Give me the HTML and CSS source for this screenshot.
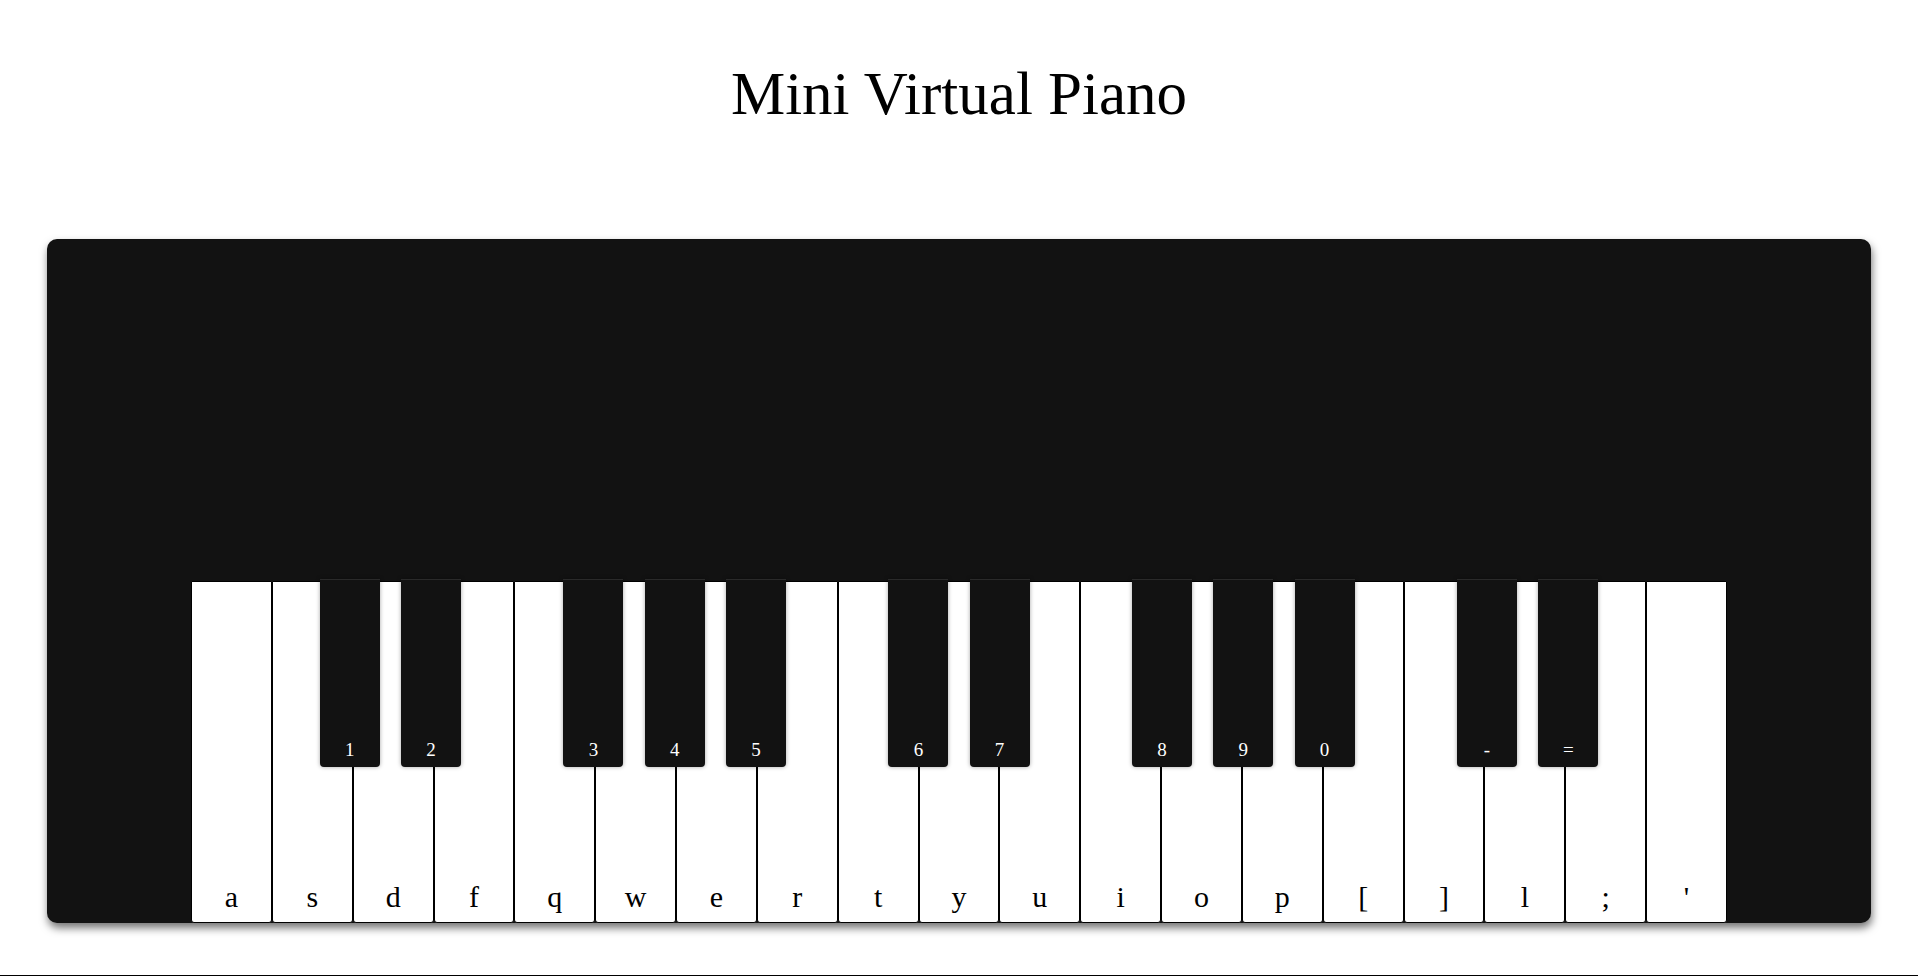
FILE: index.html
```html
<!DOCTYPE html>
<html lang="en">
<head>
  <meta charset="UTF-8" />
  <meta name="viewport" content="width=device-width, initial-scale=1" />
  <title>Mini Virtual Piano</title>
  <link rel="stylesheet" href="styles.css">
</head>
<body>

  <h1>Mini Virtual Piano</h1>

  <section class="piano">
    <div class="keys">
      <div class="key white"><span>a</span></div>
      <div class="key white"><span>s</span></div>
      <div class="key black" style="--at: 2"><span>1</span></div>
      <div class="key white"><span>d</span></div>
      <div class="key black" style="--at: 3"><span>2</span></div>
      <div class="key white"><span>f</span></div>
      <div class="key white"><span>q</span></div>
      <div class="key black" style="--at: 5"><span>3</span></div>
      <div class="key white"><span>w</span></div>
      <div class="key black" style="--at: 6"><span>4</span></div>
      <div class="key white"><span>e</span></div>
      <div class="key black" style="--at: 7"><span>5</span></div>
      <div class="key white"><span>r</span></div>
      <div class="key white"><span>t</span></div>
      <div class="key black" style="--at: 9"><span>6</span></div>
      <div class="key white"><span>y</span></div>
      <div class="key black" style="--at: 10"><span>7</span></div>
      <div class="key white"><span>u</span></div>
      <div class="key white"><span>i</span></div>
      <div class="key black" style="--at: 12"><span>8</span></div>
      <div class="key white"><span>o</span></div>
      <div class="key black" style="--at: 13"><span>9</span></div>
      <div class="key white"><span>p</span></div>
      <div class="key black" style="--at: 14"><span>0</span></div>
      <div class="key white"><span>[</span></div>
      <div class="key white"><span>]</span></div>
      <div class="key black" style="--at: 16"><span>-</span></div>
      <div class="key white"><span>l</span></div>
      <div class="key black" style="--at: 17"><span>=</span></div>
      <div class="key white"><span>;</span></div>
      <div class="key white"><span>'</span></div>
    </div>
  </section>

  <footer class="footer"></footer>

</body>
</html>
```

FILE: styles.css
```css
body {
  margin: 0;
  font-family: "Liberation Serif", "Times New Roman", serif;
  background: #fff;
  color: #000;
}

h1 {
  margin: 59px 0 0;
  font-size: 61px;
  font-weight: normal;
  text-align: center;
}

.piano {
  margin: 110px 47px 0;
  height: 684px;
  box-sizing: border-box;
  padding-top: 342px;
  background: #121212;
  border-radius: 10px;
  box-shadow: 1px 5px 8px rgba(0, 0, 0, 0.55);
}

.keys {
  display: flex;
  justify-content: center;
  align-items: flex-start;
}

.key {
  display: flex;
  flex-direction: column;
  justify-content: flex-end;
  align-items: center;
  box-sizing: border-box;
  flex-shrink: 0;
}

.key.white {
  width: 80.84px;
  height: 342px;
  padding-bottom: 8px;
  background: #fff;
  border: 1px solid #000;
  border-radius: 0 0 3px 3px;
  font-size: 30px;
}

/* black keys sit between whites, spread a bit wider than the white grid */
.key.black {
  --shift: calc((var(--at, 9.5) - 9.5) * 0.4px);
  position: relative;
  z-index: 2;
  width: 60px;
  height: 188px;
  margin: -2px calc(-30px - var(--shift)) 0 calc(-30px + var(--shift));
  padding-bottom: 6px;
  background: #121212;
  border-top: 1px solid #2a2a2a;
  border-radius: 0 0 4px 4px;
  box-shadow: 0 0 4px rgba(0, 0, 0, 0.35);
  color: #fff;
  font-size: 19px;
}

.footer {
  margin-top: 52px;
  border-top: 1px solid #000;
  height: 10px;
}
```
